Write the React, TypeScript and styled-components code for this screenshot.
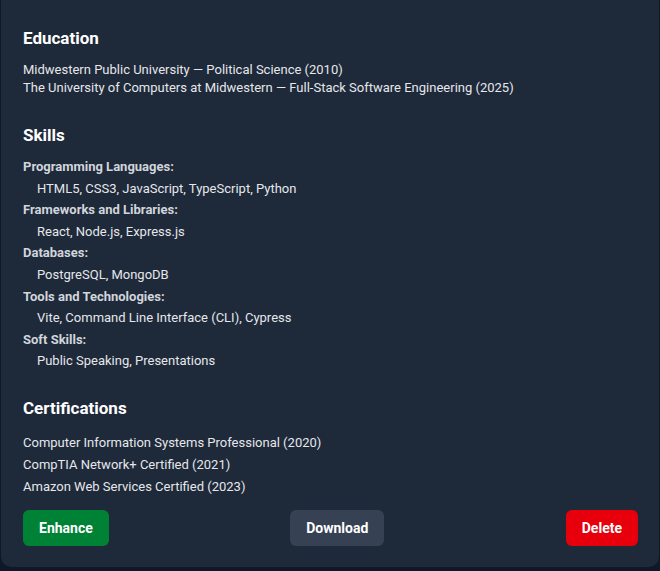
import React from "react";
import styled, { createGlobalStyle } from "styled-components";

const Global = createGlobalStyle`
  html, body { margin: 0; padding: 0; background: #101828; }
  body { font-family: Roboto, "Noto Sans", Arial, sans-serif; -webkit-font-smoothing: antialiased; }
`;

const Page = styled.div`
  padding: 0 1px 4px 1px;
  min-height: 571px;
  box-sizing: border-box;
`;

const Card = styled.div`
  background: #1e2939;
  border-radius: 0 0 10px 10px;
  padding: 24px 21px 21px 22px;
  display: flex;
  flex-direction: column;
`;

const Section = styled.section<{ $gap: number }>`
  margin-top: ${(p) => p.$gap}px;
  &:first-child { margin-top: 0; }
`;

const Heading = styled.h2<{ $after: number }>`
  margin: 0 0 ${(p) => p.$after}px 0;
  font-size: 17px;
  line-height: 28px;
  font-weight: 700;
  color: #ffffff;
`;

const Line = styled.p<{ $lh: number }>`
  margin: 0;
  font-size: 13px;
  line-height: ${(p) => p.$lh}px;
  color: #e5e7eb;
`;

const Label = styled.div`
  font-size: 13px;
  line-height: 21.6px;
  font-weight: 700;
  color: #d1d5dc;
`;

const Item = styled.div`
  font-size: 13px;
  line-height: 21.6px;
  color: #e5e7eb;
  padding-left: 14px;
`;

const Actions = styled.div`
  margin-top: 12px;
  display: flex;
  justify-content: space-between;
  align-items: center;
`;

const Button = styled.button<{ $bg: string }>`
  height: 36px;
  padding: 0 16px;
  border: none;
  border-radius: 6px;
  background: ${(p) => p.$bg};
  color: #ffffff;
  font-family: inherit;
  font-size: 14px;
  font-weight: 700;
  cursor: pointer;
`;

const skills: [string, string][] = [
  ["Programming Languages:", "HTML5, CSS3, JavaScript, TypeScript, Python"],
  ["Frameworks and Libraries:", "React, Node.js, Express.js"],
  ["Databases:", "PostgreSQL, MongoDB"],
  ["Tools and Technologies:", "Vite, Command Line Interface (CLI), Cypress"],
  ["Soft Skills:", "Public Speaking, Presentations"],
];

const certs = [
  "Computer Information Systems Professional (2020)",
  "CompTIA Network+ Certified (2021)",
  "Amazon Web Services Certified (2023)",
];

export default function App() {
  return (
    <>
      <Global />
      <Page>
        <Card>
          <Section $gap={0}>
            <Heading $after={9}>Education</Heading>
            <Line $lh={18}>Midwestern Public University — Political Science (2010)</Line>
            <Line $lh={18}>
              The University of Computers at Midwestern — Full-Stack Software Engineering (2025)
            </Line>
          </Section>
          <Section $gap={24}>
            <Heading $after={7}>Skills</Heading>
            {skills.map(([l, v]) => (
              <React.Fragment key={l}>
                <Label>{l}</Label>
                <Item>{v}</Item>
              </React.Fragment>
            ))}
          </Section>
          <Section $gap={22}>
            <Heading $after={10}>Certifications</Heading>
            {certs.map((c) => (
              <Line key={c} $lh={22}>
                {c}
              </Line>
            ))}
          </Section>
          <Actions>
            <Button $bg="#008236">Enhance</Button>
            <Button $bg="#364153">Download</Button>
            <Button $bg="#e7000b">Delete</Button>
          </Actions>
        </Card>
      </Page>
    </>
  );
}
